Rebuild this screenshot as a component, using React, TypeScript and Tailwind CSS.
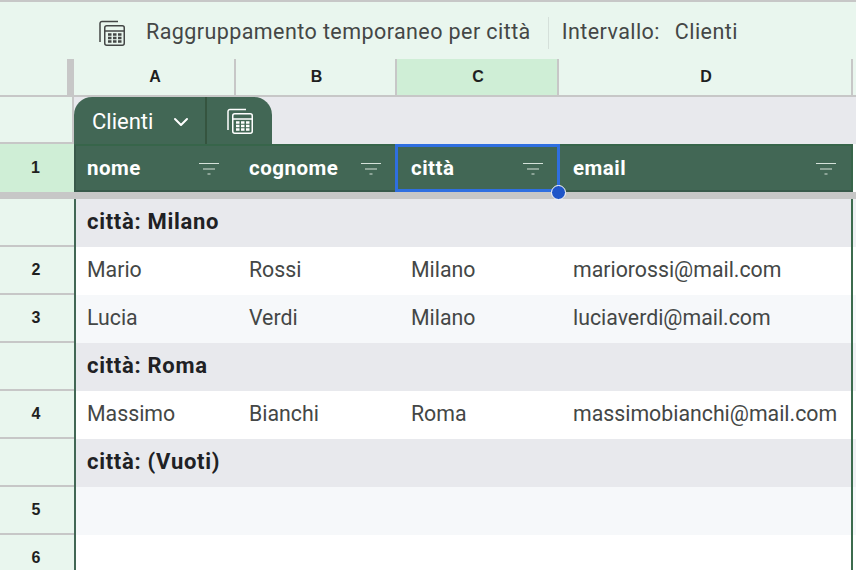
import { ChevronDown } from 'lucide-react';

const columns = [
  { label: 'A', width: 'w-[162px]', active: false },
  { label: 'B', width: 'w-[161px]', active: false },
  { label: 'C', width: 'w-[162px]', active: true },
  { label: 'D', width: 'w-[294px]', active: false },
];

const widths = ['w-[162px]', 'w-[162px]', 'w-[162px]', 'flex-1'];

type Row =
  | { kind: 'group'; label: string }
  | { kind: 'data'; num: string; cells: string[]; stripe: boolean };

const rows: Row[] = [
  { kind: 'group', label: 'città: Milano' },
  { kind: 'data', num: '2', cells: ['Mario', 'Rossi', 'Milano', 'mariorossi@mail.com'], stripe: false },
  { kind: 'data', num: '3', cells: ['Lucia', 'Verdi', 'Milano', 'luciaverdi@mail.com'], stripe: true },
  { kind: 'group', label: 'città: Roma' },
  { kind: 'data', num: '4', cells: ['Massimo', 'Bianchi', 'Roma', 'massimobianchi@mail.com'], stripe: false },
  { kind: 'group', label: 'città: (Vuoti)' },
  { kind: 'data', num: '5', cells: ['', '', '', ''], stripe: true },
  { kind: 'data', num: '6', cells: ['', '', '', ''], stripe: false },
];

function TableIcon({ className }: { className?: string }) {
  return (
    <svg viewBox="0 0 26 26" fill="none" stroke="currentColor" className={className}>
      <path d="M1 22V3.500A2 2 0 0 1 3 1.500h16" strokeWidth="1.500" />
      <rect x="5.750" y="5.750" width="19.500" height="19.500" rx="2" strokeWidth="1.500" />
      <path d="M6 11h19" strokeWidth="1.500" />
      <path d="M9 14.500h3.500M14 14.500h3.500M19 14.500h3.500M9 18h3.500M14 18h3.500M19 18h3.500M9 21.500h3.500M14 21.500h3.500M19 21.500h3.500" strokeWidth="2.500" />
    </svg>
  );
}

function FilterIcon() {
  return (
    <svg viewBox="0 0 20 13" className="w-5 h-[13px] text-[#d5e2da]" fill="none" stroke="currentColor" strokeWidth="1.200">
      <path d="M0 1.500h20M4 7h12M8.500 12h3" />
    </svg>
  );
}

function HeaderCell({ title, className }: { title: string; className: string }) {
  return (
    <div className={`${className} flex items-center justify-between text-white font-bold text-[20.500px] tracking-[0.500px]`}>
      <span>{title}</span>
      <FilterIcon />
    </div>
  );
}

export default function App() {
  return (
    <div className="w-[856px] h-[570px] overflow-hidden bg-white font-['Roboto',sans-serif]">
      {/* Toolbar */}
      <div className="h-[59px] bg-[#e9f6ee] border-t-2 border-[#c7c7c7] flex items-center pt-[4px] pl-[99px] text-[21.500px] tracking-[0.420px] text-[#444746]">
        <TableIcon className="w-[26px] h-[26px] text-[#444746]" />
        <span className="ml-[21px]">Raggruppamento temporaneo per città</span>
        <div className="w-px h-8 bg-[#d5e0da] ml-[17px]" />
        <span className="ml-[13px]">Intervallo:</span>
        <span className="ml-[15px]">Clienti</span>
      </div>

      {/* Column letters */}
      <div className="h-[38px] flex bg-[#e9f6ee] border-b-2 border-[#c7c7c7]">
        <div className="w-[74px] shrink-0 flex justify-end">
          <div className="w-[7px] h-full bg-[#c7c7c7]" />
        </div>
        {columns.map(col => (
          <div
            key={col.label}
            className={`${col.width} shrink-0 flex items-center justify-center pl-[2px] border-r-2 border-[#c7c7c7] text-[16px] font-bold text-[#1f1f1f] font-['Liberation_Sans',sans-serif] ${col.active ? 'bg-[#cfeed6]' : ''}`}
          >
            {col.label}
          </div>
        ))}
      </div>

      {/* Tab row */}
      <div className="h-[47px] flex">
        <div className="w-[74px] shrink-0 bg-[#e9f6ee] border-r-2 border-b-2 border-[#c7c7c7]" />
        <div className="flex-1 bg-[#e8e9ed] flex items-end">
          <div className="h-[47px] w-[198px] bg-[#426755] rounded-t-[18px] flex text-white">
            <div className="w-[133px] flex items-center pl-[18px] border-r-2 border-[#35543f] text-[22px]">
              <span className="pt-[1px]">Clienti</span>
              <ChevronDown className="w-[24px] h-[24px] ml-[16px] mt-[2px]" strokeWidth={2} />
            </div>
            <div className="flex-1 flex items-center justify-center">
              <TableIcon className="w-[26px] h-[26px] text-white" />
            </div>
          </div>
        </div>
      </div>

      {/* Header row */}
      <div className="h-[48px] flex">
        <div className="w-[74px] shrink-0 bg-[#cfeed6] flex items-center justify-center pr-[3px] text-[16px] font-bold text-[#1f1f1f] font-['Liberation_Sans',sans-serif]">
          1
        </div>
        <div className="w-[779px] flex bg-[#426755] border-2 border-t-[#37654a] border-r-[#37654a] border-b-[#38594a] border-l-[#38594a] relative">
          <HeaderCell title="nome" className="w-[160px] pl-[11px] pr-[17px]" />
          <HeaderCell title="cognome" className="w-[161px] pl-[13px] pr-[16px]" />
          <HeaderCell title="città" className="w-[161px] pl-[14px] pr-[15px] outline-3 -outline-offset-1 outline-[#2f6fe0]" />
          <HeaderCell title="email" className="flex-1 pl-[15px] pr-[15px]" />
          <div className="absolute left-[475px] -bottom-[10px] w-[15px] h-[15px] rounded-full bg-[#1f55c8] border border-white z-10" />
        </div>
      </div>
      <div className="h-[7px] bg-[#c7c7c7]" />

      {/* Rows */}
      <div>
        {rows.map((row, i) => (
          <div key={i} className="h-[48px] flex">
            <div className="w-[74px] shrink-0 bg-[#e9f6ee] border-b-2 border-[#c7c7c7] flex items-center justify-center pr-[2px] text-[16px] font-bold text-[#1f1f1f] font-['Liberation_Sans',sans-serif]">
              {row.kind === 'data' ? row.num : ''}
            </div>
            <div className="w-[2px] shrink-0 bg-[#426755]" />
            {row.kind === 'group' ? (
              <div className="flex-1 bg-[#e8e9ed] flex items-center pl-[11px] pb-[3px] text-[22px] tracking-[0.700px] font-bold text-[#202124]">
                {row.label}
              </div>
            ) : (
              <div className={`flex-1 flex items-center pb-[2px] text-[21.300px] text-[#444746] ${row.stripe ? 'bg-[#f6f8fa]' : 'bg-white'}`}>
                {row.cells.map((cell, j) => (
                  <div key={j} className={`${widths[j]} pl-[11px] whitespace-nowrap`}>
                    {cell}
                  </div>
                ))}
              </div>
            )}
            <div className="w-[2px] shrink-0 bg-[#3c6b4e]" />
            <div className={`w-[3px] shrink-0 ${row.kind === 'group' ? 'bg-[#eff0f3]' : row.stripe ? 'bg-[#f6f8fa]' : 'bg-white'}`} />
          </div>
        ))}
      </div>
    </div>
  );
}
